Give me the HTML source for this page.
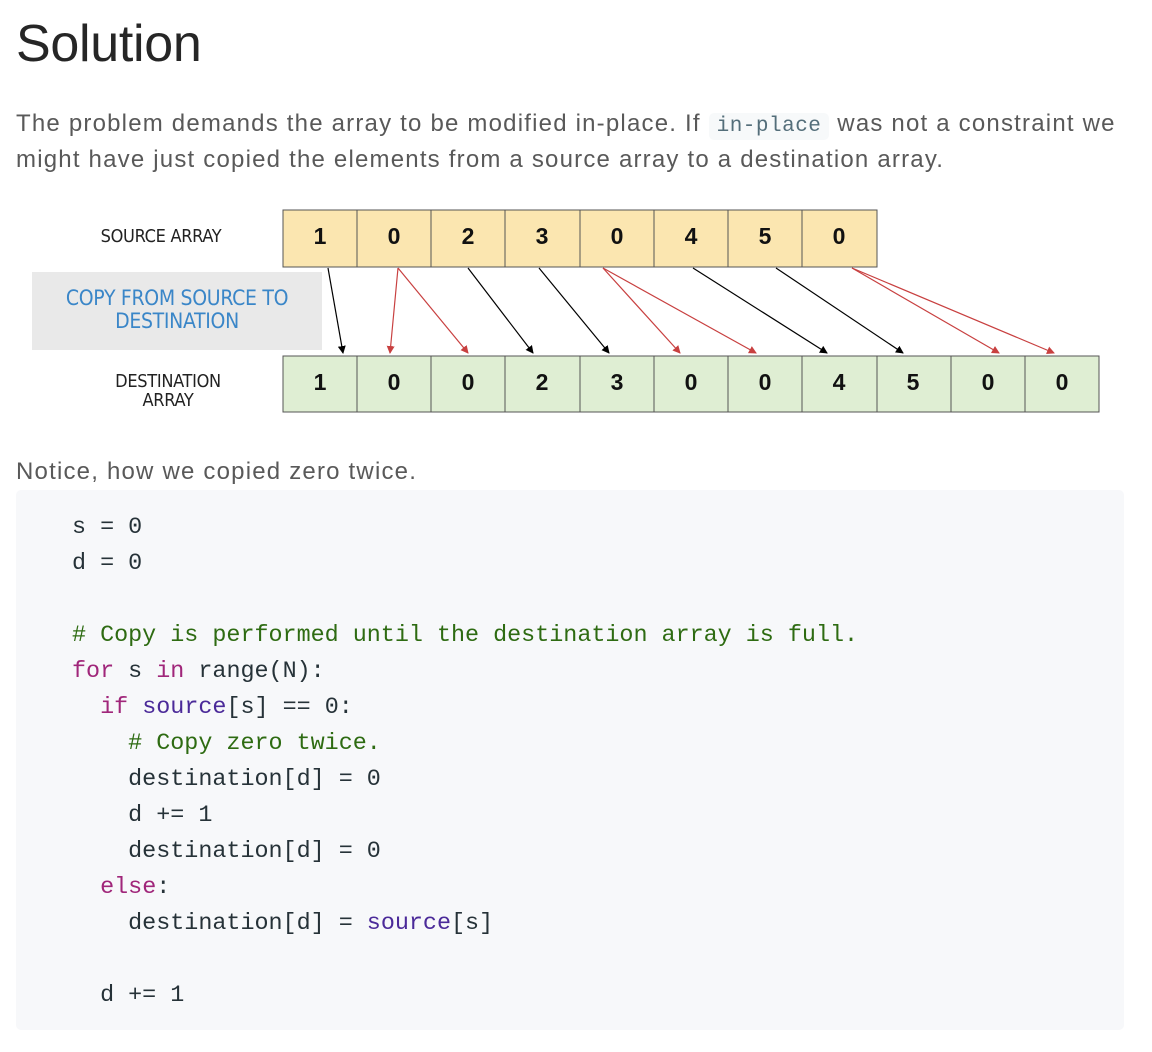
<!DOCTYPE html>
<html><head><meta charset="utf-8"><style>
body{margin:0;width:1152px;height:1052px;background:#fff;font-family:"Liberation Sans",sans-serif;position:relative;overflow:hidden}
.a{position:absolute;white-space:nowrap}
h1{position:absolute;left:16px;top:14px;margin:0;font-size:52px;font-weight:normal;color:#262626;letter-spacing:-0.3px}
.p{font-size:24px;letter-spacing:1.2px;color:#595959;line-height:36px}
.ic{font-family:"Liberation Mono",monospace;background:#f7f9fa;color:#546e7a;border-radius:5px;padding:2px 8px;font-size:21px;letter-spacing:0.5px}
.code{position:absolute;left:16px;top:490px;width:1108px;height:540px;background:#f7f8fa;border-radius:5px}
.code pre{margin:0;position:absolute;left:56px;top:20px;font-family:"Liberation Mono",monospace;font-size:23.4px;line-height:36px;color:#263238}
.c{color:#2e6b12}.k{color:#a0267a}.b{color:#4b2a99}
.hand{font-family:"DejaVu Sans Condensed",sans-serif;font-size:18px;color:#333;letter-spacing:-0.3px}
</style></head><body>
<h1>Solution</h1>
<div class="a p" style="left:16px;top:106px">The problem demands the array to be modified in-place. If <span class="ic">in-place</span> was not a constraint we</div>
<div class="a p" style="left:16px;top:142px">might have just copied the elements from a source array to a destination array.</div>

<svg class="a" style="left:0;top:200px" width="1152" height="220" viewBox="0 200 1152 220">
<defs>
<marker id="ab" markerWidth="8" markerHeight="8" refX="7" refY="4" orient="auto" markerUnits="userSpaceOnUse"><path d="M0,0 L8,4 L0,8z" fill="#000"/></marker>
<marker id="ar" markerWidth="8" markerHeight="8" refX="7" refY="4" orient="auto" markerUnits="userSpaceOnUse"><path d="M0,0 L8,4 L0,8z" fill="#c84040"/></marker>
</defs>
<rect x="32" y="272" width="290" height="78" fill="#e9e9e9"/>
<g font-family="Liberation Sans,sans-serif" font-weight="bold" font-size="23" text-anchor="middle" fill="#111">
<rect x="283" y="210" width="594" height="57" fill="#fbe6b0" stroke="#555" stroke-width="1"/>
<g stroke="#555" stroke-width="1">
<line x1="357" y1="210" x2="357" y2="267"/><line x1="431" y1="210" x2="431" y2="267"/><line x1="505" y1="210" x2="505" y2="267"/><line x1="580" y1="210" x2="580" y2="267"/><line x1="654" y1="210" x2="654" y2="267"/><line x1="728" y1="210" x2="728" y2="267"/><line x1="802" y1="210" x2="802" y2="267"/>
</g>
<text x="320" y="244">1</text><text x="394" y="244">0</text><text x="468" y="244">2</text><text x="542" y="244">3</text><text x="617" y="244">0</text><text x="691" y="244">4</text><text x="765" y="244">5</text><text x="839" y="244">0</text>
<rect x="283" y="356" width="816" height="56" fill="#dfeed3" stroke="#555" stroke-width="1"/>
<g stroke="#555" stroke-width="1">
<line x1="357" y1="356" x2="357" y2="412"/><line x1="431" y1="356" x2="431" y2="412"/><line x1="505" y1="356" x2="505" y2="412"/><line x1="580" y1="356" x2="580" y2="412"/><line x1="654" y1="356" x2="654" y2="412"/><line x1="728" y1="356" x2="728" y2="412"/><line x1="802" y1="356" x2="802" y2="412"/><line x1="877" y1="356" x2="877" y2="412"/><line x1="951" y1="356" x2="951" y2="412"/><line x1="1025" y1="356" x2="1025" y2="412"/>
</g>
<text x="320" y="390">1</text><text x="394" y="390">0</text><text x="468" y="390">0</text><text x="542" y="390">2</text><text x="617" y="390">3</text><text x="691" y="390">0</text><text x="765" y="390">0</text><text x="839" y="390">4</text><text x="913" y="390">5</text><text x="988" y="390">0</text><text x="1062" y="390">0</text>
</g>
<g stroke-width="1.2" fill="none">
<line x1="328" y1="268" x2="343" y2="353" stroke="#000" marker-end="url(#ab)"/>
<line x1="398" y1="268" x2="390" y2="353" stroke="#c84040" marker-end="url(#ar)"/>
<line x1="398" y1="268" x2="468" y2="353" stroke="#c84040" marker-end="url(#ar)"/>
<line x1="468" y1="268" x2="533" y2="353" stroke="#000" marker-end="url(#ab)"/>
<line x1="539" y1="268" x2="609" y2="353" stroke="#000" marker-end="url(#ab)"/>
<line x1="603" y1="268" x2="680" y2="353" stroke="#c84040" marker-end="url(#ar)"/>
<line x1="603" y1="268" x2="756" y2="353" stroke="#c84040" marker-end="url(#ar)"/>
<line x1="693" y1="268" x2="827" y2="353" stroke="#000" marker-end="url(#ab)"/>
<line x1="776" y1="268" x2="903" y2="353" stroke="#000" marker-end="url(#ab)"/>
<line x1="852" y1="268" x2="999" y2="353" stroke="#c84040" marker-end="url(#ar)"/>
<line x1="852" y1="268" x2="1054" y2="353" stroke="#c84040" marker-end="url(#ar)"/>
</g>
<g class="hand" text-anchor="middle">
<text x="161" y="242" fill="#222">SOURCE ARRAY</text>
<text x="177" y="305" fill="#3a86c8" font-size="21">COPY FROM SOURCE TO</text>
<text x="177" y="328" fill="#3a86c8" font-size="21">DESTINATION</text>
<text x="168" y="387" fill="#222">DESTINATION</text>
<text x="168" y="406" fill="#222">ARRAY</text>
</g>
</svg>

<div class="a p" style="left:16px;top:454px">Notice, how we copied zero twice.</div>
<div class="code"><pre>s = 0
d = 0

<span class="c"># Copy is performed until the destination array is full.</span>
<span class="k">for</span> s <span class="k">in</span> range(N):
  <span class="k">if</span> <span class="b">source</span>[s] == 0:
    <span class="c"># Copy zero twice.</span>
    destination[d] = 0
    d += 1
    destination[d] = 0
  <span class="k">else</span>:
    destination[d] = <span class="b">source</span>[s]

  d += 1</pre></div>
</body></html>
